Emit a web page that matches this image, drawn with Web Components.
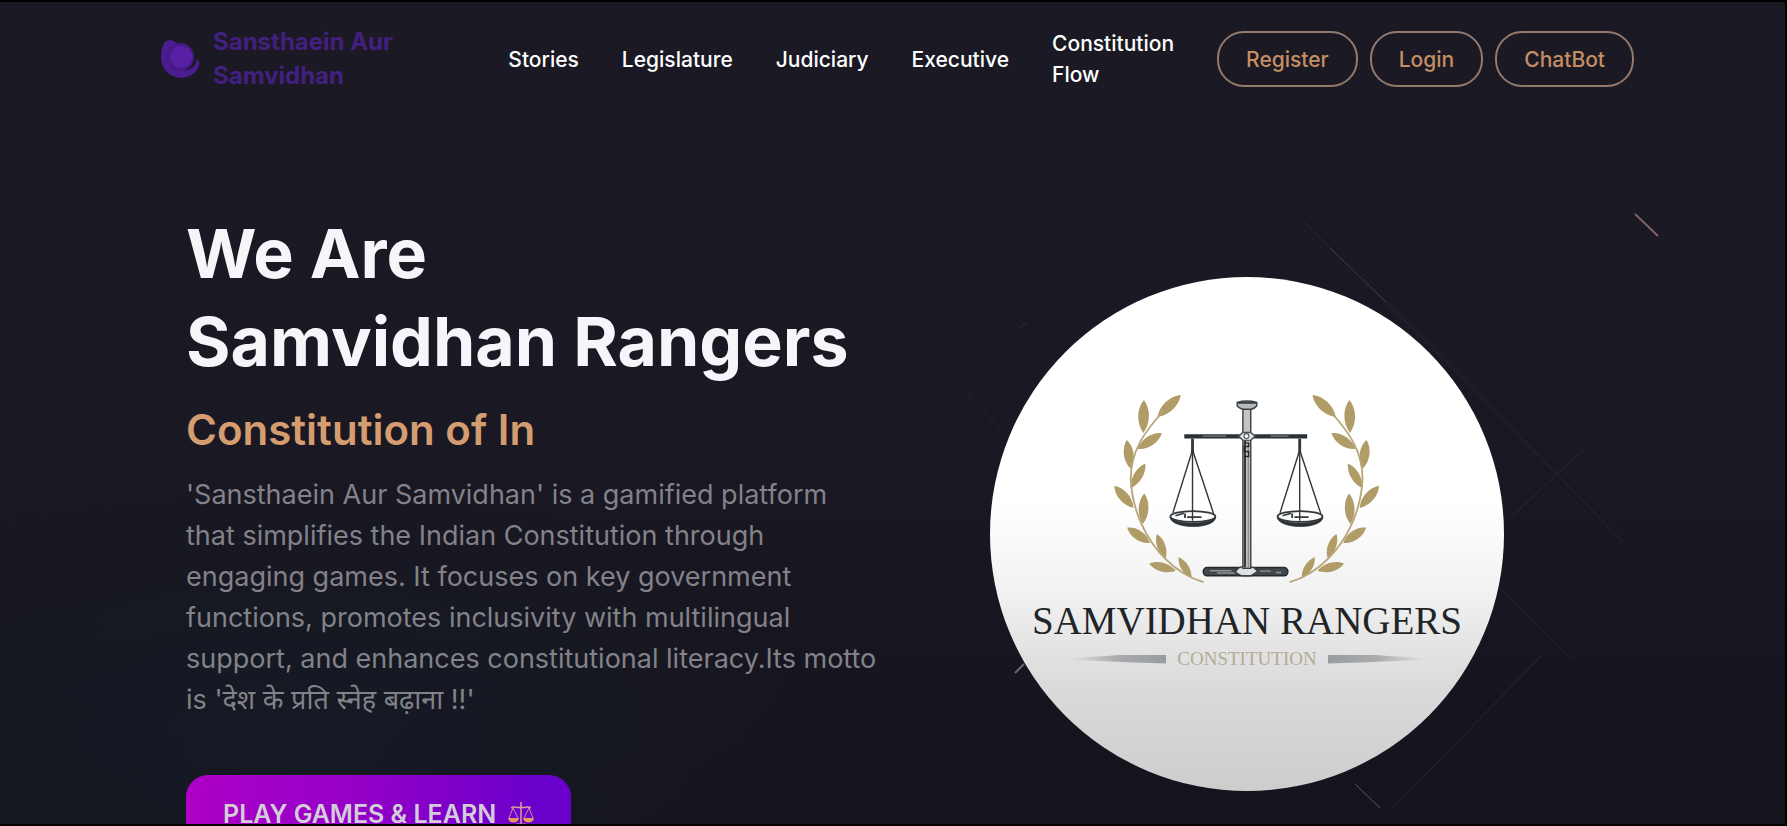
<!DOCTYPE html>
<html lang="en">
<head>
<meta charset="utf-8">
<title>Sansthaein Aur Samvidhan</title>
<style>
body { margin: 0; background: #000; font-family: Inter, "Noto Sans", sans-serif; color: #fff; }
</style>
</head>
<body>
<sr-page>
  <sr-header slot="header">
    <sr-brand slot="brand">Sansthaein Aur Samvidhan</sr-brand>
    <sr-nav-link href="#stories">Stories</sr-nav-link>
    <sr-nav-link href="#legislature">Legislature</sr-nav-link>
    <sr-nav-link href="#judiciary">Judiciary</sr-nav-link>
    <sr-nav-link href="#executive">Executive</sr-nav-link>
    <sr-nav-link href="#flow">Constitution<br>Flow</sr-nav-link>
    <sr-pill-button slot="actions">Register</sr-pill-button>
    <sr-pill-button slot="actions">Login</sr-pill-button>
    <sr-pill-button slot="actions">ChatBot</sr-pill-button>
  </sr-header>
  <sr-hero>
    <span slot="title">We Are<br>Samvidhan Rangers</span>
    <span slot="subtitle">Constitution of In</span>
    <span slot="text">'Sansthaein Aur Samvidhan' is a gamified platform that simplifies the Indian Constitution through engaging games. It focuses on key government functions, promotes inclusivity with multilingual support, and enhances constitutional literacy.Its motto is 'देश के प्रति स्नेह बढ़ाना !!'</span>
    <sr-play-button slot="cta">PLAY GAMES &amp; LEARN</sr-play-button>
    <sr-emblem slot="emblem"><span slot="name">SAMVIDHAN RANGERS</span><span slot="tag">CONSTITUTION</span></sr-emblem>
  </sr-hero>
</sr-page>

<script>
const define = (name, html) => customElements.define(name, class extends HTMLElement {
  constructor() {
    super();
    this.attachShadow({ mode: 'open' }).innerHTML = html;
  }
});

define('sr-page', `
<style>
  :host { display: block; position: relative; box-sizing: border-box; height: 100vh; overflow: hidden;
    border: solid #000; border-width: 2px 2px 2px 0;
    background: radial-gradient(ellipse at 16% 90%, #151a24 0, #151a2400 26%), linear-gradient(#1b1a24, #191823 55%, #15141d); }
  .streaks { position: absolute; top: -2px; right: -2px; width: 900px; height: 826px; fill: none; stroke: #2b2a3a; stroke-width: 1; }
  .content { position: relative; }
</style>
<svg class="streaks" viewBox="887 0 900 826" aria-hidden="true">
  <path d="M1303 221 1450 365 1623 542" stroke="#292838"/>
  <path d="M1330 248 1386 302" stroke="#3b3a52"/>
  <path d="M1510 518 1583 450M1543 654 1393 808" stroke="#262a36"/>
  <path d="M1500 588 1573 660M968 395 1002 430" stroke="#2a2435"/>
  <path d="M1635 214 1658 236" stroke="#80635f" stroke-width="2"/>
  <path d="M1355 784 1380 808" stroke="#5b5560"/>
  <path d="M1015 673 1024 664" stroke="#6b686c" stroke-width="2"/>
  <path d="M1017 329 1027 323" stroke="#262b3a"/>
</svg>
<div class="content"><slot name="header"></slot><main><slot></slot></main></div>`);

define('sr-header', `
<style>
  :host { display: block; }
  header { display: flex; align-items: center; padding: 23px 151px 0 161px; }
  nav { display: flex; align-items: center; gap: 43px; margin-left: auto; }
  .actions { display: flex; gap: 12px; margin-left: 43px; }
</style>
<header><slot name="brand"></slot><nav><slot></slot></nav><div class="actions"><slot name="actions"></slot></div></header>`);

define('sr-brand', `
<style>
  :host { display: block; width: 240px; }
  a { display: flex; align-items: center; gap: 12px; color: #43207f; font-weight: 700; font-size: 24px; line-height: 34px; text-decoration: none; }
  svg { flex: none; width: 40px; height: 40px; }
</style>
<a href="#home">
  <svg viewBox="0 0 40 40" aria-hidden="true">
    <path d="M4 3C8 0 14 1 16 5 8 7 5 15 8 22c4 9 16 12 23 7 2-2 4-4 5-9 4 2 2 8-1 12-7 9-22 9-30 0C-2 24-1 10 4 3Z" fill="#4c1c90"/>
    <circle cx="19" cy="18" r="14" fill="#471a86"/>
    <circle cx="20" cy="18" r="11" fill="#5920a5"/>
  </svg>
  <span><slot></slot></span>
</a>`);

customElements.define('sr-nav-link', class extends HTMLElement {
  constructor() {
    super();
    this.attachShadow({ mode: 'open' }).innerHTML = `
<style>
  :host { display: block; }
  a { display: block; color: #fff; font-weight: 500; font-size: 21px; line-height: 31px; text-decoration: none; }
</style>
<a><slot></slot></a>`;
  }
  connectedCallback() {
    this.shadowRoot.querySelector('a').href = this.getAttribute('href');
  }
});

define('sr-pill-button', `
<style>
  :host { display: block; }
  button { display: block; height: 56px; padding: 0 27px; border: 2px solid #94796d; border-radius: 27px; background: none;
    color: #c58e63; font: 500 21px/31px Inter, sans-serif; cursor: pointer; }
</style>
<button type="button"><slot></slot></button>`);

define('sr-hero', `
<style>
  :host { display: block; }
  section { display: flex; align-items: flex-start; justify-content: space-between; padding: 116px 281px 0 186px; }
  .copy { width: 694px; }
  h1 { margin: 0 0 15px; font-size: 68px; line-height: 88px; font-weight: 700; color: #f5f5fa; white-space: nowrap; }
  h2 { margin: 0 0 14px; font-size: 42px; line-height: 60px; font-weight: 600; color: #d59c70; }
  p { margin: 0 0 55px; font-size: 27px; line-height: 41px; color: #838289; }
  .emblem { margin-top: 68px; }
</style>
<section>
  <div class="copy">
    <h1><slot name="title"></slot></h1>
    <h2><slot name="subtitle"></slot></h2>
    <p><slot name="text"></slot></p>
    <slot name="cta"></slot>
  </div>
  <div class="emblem"><slot name="emblem"></slot></div>
</section>`);

define('sr-play-button', `
<style>
  :host { display: block; }
  button { display: flex; align-items: center; gap: 12px; height: 78px; padding: 0 37px; border: 0; border-radius: 22px;
    background: linear-gradient(100deg, #ae00c6, #9400c8 45%, #6900cb 90%); color: #d2cdd8; font: 600 25px/32px Inter, sans-serif; cursor: pointer; }
  svg { width: 26px; height: 26px; }
</style>
<button type="button"><slot></slot>
  <svg viewBox="0 0 26 26" fill="none" stroke="#cf8fa0" stroke-width="1.5" aria-hidden="true">
    <path d="M13 1v22M3 7c4-3 6 1 10-1 4 2 6-2 10 1" stroke="#d9a09a"/>
    <path d="M5 7 1 17M5 7l5 10M21 7l-5 10M21 7l4 10" stroke-width="1"/>
    <path d="M0 17h11c-1 6-10 6-11 0ZM15 17h11c-1 6-10 6-11 0Z" fill="#e39a5c" stroke="none"/>
    <path d="M8 24h10" stroke-width="3"/>
  </svg>
</button>`);

/* Laurel leaves as [base x, base y, tip x, tip y, width]. */
const leaves = [
  [553, 467, 618, 406, 40], [513, 512, 515, 420, 42], [498, 557, 565, 513, 38], [478, 612, 467, 532, 38],
  [478, 667, 519, 598, 34], [486, 722, 432, 660, 38], [512, 767, 516, 682, 38], [532, 820, 468, 777, 38],
  [576, 862, 551, 795, 32], [604, 898, 530, 878, 34], [648, 918, 612, 860, 30]
].map(([bx, by, tx, ty, w]) => {
  const dx = tx - bx, dy = ty - by, len = Math.hypot(dx, dy);
  const nx = -dy / len * w / 2, ny = dx / len * w / 2;
  const at = (t, side) => `${(bx + dx * t + nx * side).toFixed(1)} ${(by + dy * t + ny * side).toFixed(1)}`;
  return `M${bx} ${by}C${at(.3, 1)} ${at(.75, .9)} ${tx} ${ty}C${at(.75, -.9)} ${at(.3, -1)} ${bx} ${by}Z`;
}).join('');

define('sr-emblem', `
<style>
  :host { display: flex; flex-direction: column; align-items: center; box-sizing: border-box; width: 514px; aspect-ratio: 1; padding-top: 114px;
    border-radius: 50%; background: linear-gradient(#fff 44%, #f1f1f2 62%, #dcdcdc 78%, #cdcdcd);
    font-family: "Liberation Serif", serif; white-space: nowrap; }
  .art { width: 274px; height: 197px; }
  .name { margin-top: 13px; font-size: 39px; line-height: 40px; color: #202426; }
  .tag { display: flex; align-items: center; gap: 11px; margin-top: 8px; font-size: 19px; line-height: 20px; color: #b3aa92; }
  .bar { width: 98px; height: 9px; background: linear-gradient(90deg, #a9abad00, #a9abad 50%, #999c9f); clip-path: polygon(0 45%, 60% 0, 100% 0, 100% 100%, 60% 85%, 0 55%); }
  .bar:last-child { transform: scaleX(-1); }
</style>
<svg class="art" viewBox="420 395 767 551" aria-hidden="true">
  <defs>
    <g id="laurel">
      <path d="${leaves}" fill="#b09c67"/>
      <path d="M570 450C520 505 478 560 478 640 482 730 520 810 575 865 610 900 645 920 682 930" fill="none" stroke="#b8a578" stroke-width="5"/>
    </g>
    <g id="pan" fill="none" stroke="#33383c">
      <path d="M651 528v40" stroke-width="8"/>
      <path d="M651 560 596 736M651 560 710 738" stroke-width="4"/>
      <path d="M651 560V758" stroke-width="4"/>
      <ellipse cx="652" cy="746" rx="63" ry="15" stroke-width="5"/>
      <path d="M588 748c4 34 124 36 128 0-20 22-108 22-128 0Z" fill="#2b3034" stroke-width="2"/>
      <path d="M603 744l24-7M630 738v12M636 748h40" stroke-width="5"/>
    </g>
  </defs>
  <use href="#laurel"/>
  <use href="#laurel" transform="translate(1605 0) scale(-1 1)"/>
  <use href="#pan"/>
  <use href="#pan" x="300"/>
  <path d="M628 522H972" stroke="#2c3135" stroke-width="12"/>
  <path d="M680 521H745M870 521H920" stroke="#747b80" stroke-width="3"/>
  <rect x="681" y="889" width="237" height="23" rx="11" fill="#42474b" stroke="#24282b" stroke-width="4"/>
  <path d="M700 898h60M720 904h50M840 899h30M885 903h14" stroke="#8d9296" stroke-width="4"/>
  <path d="M780 890q22-10 44 0l10 10-20 12h-26l-18-10Z" fill="#dfe1e2" stroke="#3a3f43" stroke-width="4"/>
  <rect x="792" y="445" width="22" height="446" fill="#c2c5c7" stroke="#3a3f43" stroke-width="4"/>
  <path d="M798 530V888" stroke="#24282b" stroke-width="5"/>
  <path d="M807 540V888" stroke="#777c80" stroke-width="3"/>
  <path d="M776 427q27-8 55 0v9q-6 8-16 10h-23q-12-3-16-10Z" fill="#b5b9bc" stroke="#3a3f43" stroke-width="4"/>
  <path d="M777 428h54" stroke="#3a3f43" stroke-width="5"/>
  <path d="M780 521l12-10h22l12 10-12 12h-22Z" fill="#e5e6e7" stroke="#4c5155" stroke-width="4"/>
  <circle cx="802" cy="521" r="7" fill="#fff" stroke="#4c5155" stroke-width="3"/>
  <path d="M796 540h12v10h-12v14h12v14h-12" fill="none" stroke="#24282b" stroke-width="4"/>
</svg>
<div class="name"><slot name="name"></slot></div>
<div class="tag"><span class="bar"></span><slot name="tag"></slot><span class="bar"></span></div>`);
</script>
</body>
</html>
